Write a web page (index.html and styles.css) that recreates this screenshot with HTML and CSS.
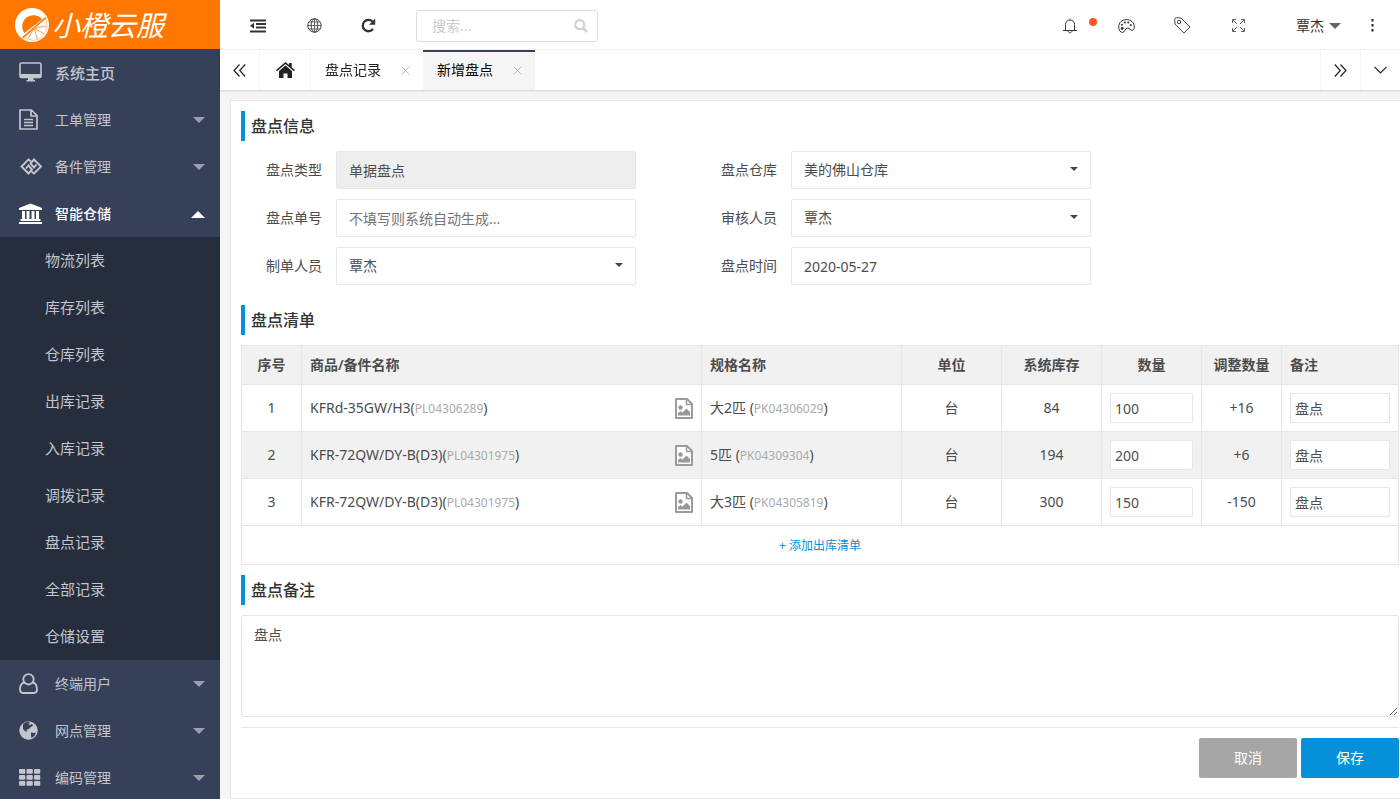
FILE: index.html
```html
<!DOCTYPE html>
<html lang="zh-CN">
<head>
<meta charset="utf-8">
<meta name="viewport" content="width=device-width, initial-scale=1">
<title>新增盘点 - 小橙云服</title>
<link rel="stylesheet" href="styles.css">
</head>
<body>
<svg class="defs" aria-hidden="true">
  <symbol id="pic" viewBox="0 0 18 21">
    <path d="M1 1h11l5 5v14H1z" fill="#fff" stroke="#999ba0" stroke-width="2" stroke-linejoin="round"/>
    <path d="M11.500 1v5.500H17" fill="none" stroke="#999ba0" stroke-width="1.500"/>
    <circle cx="5.500" cy="9.500" r="2.200" fill="#999"/>
    <path d="M3 17.500v-2.500l2.500-2 2 1.500 4-4 3.500 3.500v3.500z" fill="#999"/>
  </symbol>
  <symbol id="close" viewBox="0 0 9 9"><path d="M.7.7l7.600 7.600M8.300.7L.7 8.300" stroke="#bbb" fill="none"/></symbol>
  <symbol id="down" viewBox="0 0 12 6"><path d="M0 0h12L6 6z"/></symbol>
</svg>
<div class="app">
  <aside class="sidebar">
    <a class="brand" href="#">
      <svg width="34" height="34" viewBox="0 0 34 34" aria-hidden="true">
        <circle cx="17" cy="17" r="17" fill="#fff"/>
        <path d="M27 11.500A10.500 10.500 0 1 0 9.500 25z" fill="#ff7700"/>
        <path d="M31 9.500L7.500 29.800" stroke="#ff7700" stroke-width="1.600"/>
        <path d="M19 20.500l12-2.500M19 20.500l10 5M19 20.500l3.500 11M19 20.500l-6 10" stroke="#ffa04d" stroke-width="1"/>
        <path d="M31 10.500l1 7-1.500 7-5 5.500-7 2.500-10-2.500" fill="none" stroke="#ffb066" stroke-width=".7"/>
      </svg>
      <span>小橙云服</span>
    </a>
    <nav class="menu">
      <a class="item home" href="#">
        <svg width="24" height="22" viewBox="0 0 24 22"><rect x="1" y="1" width="21" height="14.500" rx="1.500" fill="none" stroke="currentColor" stroke-width="1.600"/><path d="M1 12h21v3a1 1 0 0 1-1 1H2a1 1 0 0 1-1-1zM9 15.500h5.500V18H16v1.500H7.500V18H9z" fill="currentColor"/></svg>
        <span>系统主页</span>
      </a>
      <button class="item" type="button">
        <svg width="24" height="22" viewBox="0 0 24 22"><path d="M1 1h11.500L18 6.500V20H1zM12 1.500V7h5.500M5 10.500h9M5 13.500h9M5 16.500h9" fill="none" stroke="currentColor" stroke-width="1.700" stroke-linejoin="round"/></svg>
        <span>工单管理</span><svg class="arrow" width="12" height="6"><use href="#down"/></svg>
      </button>
      <button class="item" type="button">
        <svg width="24" height="22" viewBox="0 0 24 22"><g fill="none" stroke="currentColor" stroke-width="1.900"><path d="M12 5.500L9.500 3.500 2.500 10.500 9.500 17.500 13 13.500 9.500 9.500 7 12.500"/><path d="M12.500 15.500L15 17.500 22 10.500 15 3.500 11.500 7.500 15 11.500 17.500 8.500"/></g></svg>
        <span>备件管理</span><svg class="arrow" width="12" height="6"><use href="#down"/></svg>
      </button>
      <button class="item active" type="button" aria-expanded="true">
        <svg width="24" height="22" viewBox="0 0 24 22"><path d="M11.500.5L23 5v2H0V5zM3 8h3v8h1.500V8h3v8h2V8h3v8H17V8h3v8h1.500v2h-20v-2H3zM0 19h23v2H0z" fill="currentColor"/></svg>
        <span>智能仓储</span><svg class="arrow" width="14" height="7" viewBox="0 0 14 7"><path d="M0 7h14L7 0z"/></svg>
      </button>
      <div class="submenu">
        <a href="#">物流列表</a><a href="#">库存列表</a><a href="#">仓库列表</a>
        <a href="#">出库记录</a><a href="#">入库记录</a><a href="#">调拨记录</a>
        <a href="#">盘点记录</a><a href="#">全部记录</a><a href="#">仓储设置</a>
      </div>
      <button class="item" type="button">
        <svg width="24" height="22" viewBox="0 0 24 22"><path d="M5.500 9.500C2.500 10 1 12.500 1 16.500c0 2.500 1.500 3.500 3 3.500h11c1.500 0 3-1 3-3.500 0-4-1.500-6.500-4.500-7" fill="none" stroke="currentColor" stroke-width="1.800"/><circle cx="9.500" cy="6.300" r="5.200" fill="none" stroke="currentColor" stroke-width="1.800"/></svg>
        <span>终端用户</span><svg class="arrow" width="12" height="6"><use href="#down"/></svg>
      </button>
      <button class="item" type="button">
        <svg width="24" height="22" viewBox="0 0 24 22"><circle cx="9.500" cy="10.500" r="9.200" fill="currentColor"/><path d="M4 4c2-1.500 4-2.200 6-2.200l1 1.500-2 .5 2 1.500 2-1.500 1 2-2.500 1.500-2 2-2 .5.500 2-2-.5-2-2.500zM12 12.500l3 .500 2-.500-1.500 3.500-3 2-.5-3z" fill="#364059"/></svg>
        <span>网点管理</span><svg class="arrow" width="12" height="6"><use href="#down"/></svg>
      </button>
      <button class="item" type="button">
        <svg width="24" height="22" viewBox="0 0 24 22"><g fill="currentColor"><rect x="0" y="2" width="6.300" height="4.700" rx="1"/><rect x="7.500" y="2" width="6.300" height="4.700" rx="1"/><rect x="15" y="2" width="6.300" height="4.700" rx="1"/><rect x="0" y="8" width="6.300" height="4.700" rx="1"/><rect x="7.500" y="8" width="6.300" height="4.700" rx="1"/><rect x="15" y="8" width="6.300" height="4.700" rx="1"/><rect x="0" y="14" width="6.300" height="4.700" rx="1"/><rect x="7.500" y="14" width="6.300" height="4.700" rx="1"/><rect x="15" y="14" width="6.300" height="4.700" rx="1"/></g></svg>
        <span>编码管理</span><svg class="arrow" width="12" height="6"><use href="#down"/></svg>
      </button>
    </nav>
  </aside>

  <div class="main">
    <header class="topbar">
      <button class="tool" type="button" aria-label="收起菜单"><svg width="16" height="14" viewBox="0 0 16 14"><path d="M0 1.500h16M6 5h10M6 8.500h10M0 12.500h16" stroke="#333" stroke-width="2" fill="none"/><path d="M0 6.800l4-3v6z" fill="#333"/></svg></button>
      <button class="tool" type="button" aria-label="网站"><svg width="15" height="15" viewBox="0 0 15 15"><g fill="none" stroke="#444"><circle cx="7.500" cy="7.500" r="6.700"/><ellipse cx="7.500" cy="7.500" rx="3.300" ry="6.700"/><path d="M.8 7.500h13.400M7.500.8v13.400M2 4h11M2 11h11" stroke-width=".8"/></g></svg></button>
      <button class="tool" type="button" aria-label="刷新"><svg width="18" height="15" viewBox="0 0 18 15"><path d="M12 11a5.700 5.700 0 1 1-.5-7.500" fill="none" stroke="#333" stroke-width="2.300"/><path d="M14.200.5v6.200H8z" fill="#333"/></svg></button>
      <label class="search">
        <input type="text" placeholder="搜索..." aria-label="搜索">
        <svg width="14" height="14" viewBox="0 0 14 14"><circle cx="5.700" cy="5.700" r="4.500" fill="none" stroke="#d2d2d2" stroke-width="2.200"/><path d="M9 9l4 4" stroke="#d2d2d2" stroke-width="2.600"/></svg>
      </label>
      <div class="tools">
        <button class="tool" type="button" aria-label="消息"><svg width="14" height="16" viewBox="0 0 14 16"><path d="M2.500 12.500v-6a4.500 4.500 0 0 1 9 0v6M0 12.500h14M5 13c.5 2.300 3.500 2.300 4 0M7 1.500V.5" fill="none" stroke="#333"/></svg><i class="dot"></i></button>
        <button class="tool" type="button" aria-label="主题"><svg width="17" height="14" viewBox="0 0 17 14"><path d="M8.500.6C4 .6.7 3.500.7 8c0 3.500 1.800 5.400 4 5.400 2.600 0 1.800-4.400 5-4.400 2.500 0 2.300 2.400 4.300 2.400 1.500 0 2.300-1.400 2.300-3.200C16.300 3.500 13 .6 8.500.6z" fill="none" stroke="#333"/><g fill="#333"><circle cx="4.200" cy="9.500" r="1.400"/><circle cx="4" cy="5.800" r="1"/><circle cx="6.800" cy="3.600" r="1"/><circle cx="10.300" cy="3.600" r="1"/><circle cx="12.800" cy="6" r="1"/></g></svg></button>
        <button class="tool" type="button" aria-label="标签"><svg width="17" height="17" viewBox="0 0 17 17"><path d="M.7 2.500Q.7.700 2.500.7L7 1l9 9-6 6L1 7z" fill="none" stroke="#445" stroke-linejoin="round"/><circle cx="5" cy="5" r="1.700" fill="none" stroke="#445"/></svg></button>
        <button class="tool" type="button" aria-label="全屏"><svg width="13" height="13" viewBox="0 0 13 13"><path d="M.5 4V.5H4M.5.5L5 5M9 .5h3.500V4M12.500.5L8 5M.5 9v3.500H4M.5 12.500L5 8M12.500 9v3.500H9M12.500 12.500L8 8" fill="none" stroke="#666"/></svg></button>
        <button class="user" type="button">覃杰<svg width="12" height="6" fill="#666"><use href="#down"/></svg></button>
        <button class="tool" type="button" aria-label="更多"><svg width="3" height="13" viewBox="0 0 3 13" fill="#222"><path d="M.5 0h2v2.500h-2zM.5 5h2v2.500h-2zM.5 10h2v2.500h-2z"/></svg></button>
      </div>
    </header>

    <div class="tabs">
      <button class="tab-ctl" type="button" aria-label="向左"><svg width="13" height="13" viewBox="0 0 13 13"><path d="M6.500.5l-5.500 6 5.500 6M12.200.5l-5.500 6 5.500 6" fill="none" stroke="#222" stroke-width="1.200"/></svg></button>
      <a class="tab-home" href="#" aria-label="首页"><svg width="19" height="16" viewBox="0 0 19 16"><path d="M9.500 0l3.500 3V1h2.700v4.300L19 8l-1 1.200-8.500-7.200L1 9.200 0 8z" fill="#222"/><path d="M9.500 3.500l6.500 5.500v7h-4.500v-4.500h-4V16H3V9z" fill="#222"/></svg></a>
      <div class="tab"><a href="#">盘点记录</a><button type="button" aria-label="关闭盘点记录"><svg width="9" height="9"><use href="#close"/></svg></button></div>
      <div class="tab current"><a href="#">新增盘点</a><button type="button" aria-label="关闭新增盘点"><svg width="9" height="9"><use href="#close"/></svg></button></div>
      <div class="tab-end">
        <button class="tab-ctl" type="button" aria-label="向右"><svg width="13" height="13" viewBox="0 0 13 13"><path d="M.8.5l5.500 6-5.500 6M6.500.5l5.500 6-5.500 6" fill="none" stroke="#222" stroke-width="1.200"/></svg></button>
        <button class="tab-ctl" type="button" aria-label="标签操作"><svg width="13" height="8" viewBox="0 0 13 8"><path d="M.5.8l6 6 6-6" fill="none" stroke="#222" stroke-width="1.200"/></svg></button>
      </div>
    </div>

    <main class="page">
      <form class="panel">
        <h2>盘点信息</h2>
        <div class="fields">
          <label for="type">盘点类型</label><input id="type" type="text" value="单据盘点" disabled>
          <label for="store">盘点仓库</label><span class="select"><select id="store"><option>美的佛山仓库</option></select></span>
          <label for="no">盘点单号</label><input id="no" type="text" placeholder="不填写则系统自动生成...">
          <label for="auditor">审核人员</label><span class="select"><select id="auditor"><option>覃杰</option></select></span>
          <label for="maker">制单人员</label><span class="select"><select id="maker"><option>覃杰</option></select></span>
          <label for="date">盘点时间</label><input id="date" type="text" value="2020-05-27">
        </div>

        <h2>盘点清单</h2>
        <table>
          <colgroup><col class="w60"><col class="w400"><col class="w200"><col class="w100"><col class="w100"><col class="w100"><col class="w80"><col></colgroup>
          <thead>
            <tr><th>序号</th><th class="left">商品/备件名称</th><th class="left">规格名称</th><th>单位</th><th>系统库存</th><th>数量</th><th>调整数量</th><th class="left">备注</th></tr>
          </thead>
          <tbody>
            <tr><td>1</td><td class="left"><div class="product"><span>KFRd-35GW/H3(<small>PL04306289</small>)</span><svg width="18" height="21"><use href="#pic"/></svg></div></td><td class="left">大2匹 (<small>PK04306029</small>)</td><td>台</td><td>84</td><td><input type="text" value="100" aria-label="数量 1"></td><td>+16</td><td><input type="text" value="盘点" aria-label="备注 1"></td></tr>
            <tr><td>2</td><td class="left"><div class="product"><span>KFR-72QW/DY-B(D3)(<small>PL04301975</small>)</span><svg width="18" height="21"><use href="#pic"/></svg></div></td><td class="left">5匹 (<small>PK04309304</small>)</td><td>台</td><td>194</td><td><input type="text" value="200" aria-label="数量 2"></td><td>+6</td><td><input type="text" value="盘点" aria-label="备注 2"></td></tr>
            <tr><td>3</td><td class="left"><div class="product"><span>KFR-72QW/DY-B(D3)(<small>PL04301975</small>)</span><svg width="18" height="21"><use href="#pic"/></svg></div></td><td class="left">大3匹 (<small>PK04305819</small>)</td><td>台</td><td>300</td><td><input type="text" value="150" aria-label="数量 3"></td><td>-150</td><td><input type="text" value="盘点" aria-label="备注 3"></td></tr>
          </tbody>
          <tfoot><tr><td colspan="8"><a href="#">+ 添加出库清单</a></td></tr></tfoot>
        </table>

        <h2 id="remark-title">盘点备注</h2>
        <textarea aria-labelledby="remark-title">盘点</textarea>
        <div class="actions">
          <button type="button" class="cancel">取消</button>
          <button type="submit" class="save">保存</button>
        </div>
      </form>
    </main>
  </div>
</div>
</body>
</html>
```
FILE: styles.css
```css
* { box-sizing: border-box; }
body {
  margin: 0;
  font: 14px/20px "Noto Sans", "Noto Sans CJK SC", sans-serif;
  color: #4c4c4c;
  background: #f5f5f5;
}
a { color: inherit; text-decoration: none; }
button, input, select, textarea { font: inherit; color: inherit; }
button { border: 0; padding: 0; background: none; cursor: pointer; }
svg { display: block; flex: none; }
.defs { position: absolute; width: 0; height: 0; }

.app { display: flex; height: 100vh; overflow: hidden; }

/* Sidebar */
.sidebar {
  flex: none;
  width: 220px;
  overflow-y: auto;
  scrollbar-width: none;
  background: #364059;
  color: #c3c6cd;
}
.brand {
  display: flex;
  align-items: center;
  gap: 3px;
  height: 49px;
  padding-left: 15px;
  background: #ff7700;
  color: #fff;
  font-size: 28px;
  line-height: 40px;
  font-style: italic;
}
.item {
  display: flex;
  align-items: center;
  gap: 12px;
  width: 100%;
  height: 47px;
  padding: 1px 15px 0 19px;
  text-align: left;
}
.item.home { padding-top: 0; font-size: 15px; font-weight: 500; }
.item.active { color: #fff; font-weight: 500; }
.arrow { margin-left: auto; fill: #9a9fac; }
.active .arrow { fill: #fff; }
.submenu { background: #262d3d; font-size: 15px; }
.submenu a { display: block; padding-left: 45px; line-height: 47px; }

/* Top bar */
.main { flex: 1; min-width: 0; display: flex; flex-direction: column; }
.topbar {
  flex: none;
  display: flex;
  align-items: center;
  height: 50px;
  padding: 2px 0 0 10px;
  background: #fff;
  border-bottom: 1px solid #f2f2f2;
  color: #333;
}
.tool {
  position: relative;
  display: flex;
  align-items: center;
  justify-content: center;
  width: 56px;
  height: 46px;
}
.dot {
  position: absolute;
  top: 15px;
  right: 1px;
  width: 8px;
  height: 8px;
  border-radius: 50%;
  background: #ff5722;
}
.search {
  display: flex;
  align-items: center;
  width: 182px;
  height: 32px;
  margin-left: 18px;
  padding: 0 9px 0 15px;
  border: 1px solid #ddd;
  border-radius: 3px;
}
.search input { flex: 1; min-width: 0; border: 0; padding: 0; outline: 0; background: none; }
.search input::placeholder { color: #ccc; }
.tools { display: flex; margin-left: auto; }
.user { display: flex; align-items: center; gap: 5px; padding-left: 30px; padding-right: 3px; }

/* Tabs */
.tabs {
  position: relative;
  flex: none;
  display: flex;
  height: 40px;
  background: #fff;
  box-shadow: 0 1px 2px rgba(0, 0, 0, .15);
  color: #222;
}
.tab-ctl, .tab-home { display: flex; align-items: center; justify-content: center; }
.tab-ctl { width: 40px; border-right: 1px solid #f4f4f4; }
.tab-home { width: 51px; border-right: 1px solid #f4f4f4; }
.tab {
  display: flex;
  align-items: center;
  justify-content: space-between;
  width: 112px;
  padding: 0 13px 0 14px;
}
.tab.current { background: #f5f5f5; border-top: 2px solid #364059; color: #000; }
.tab.current > * { margin-top: -2px; }
.tab-end { display: flex; margin-left: auto; }
.tab-end .tab-ctl { border-right: 0; border-left: 1px solid #f4f4f4; }

/* Page */
.page { flex: 1; min-height: 0; padding: 10px 0 0 10px; overflow: auto; scrollbar-width: none; }
.panel {
  padding: 10px 1px 20px 10px;
  background: #fff;
  border: 1px solid #e6e6e6;
  border-right: 0;
}
h2 {
  margin: 0 0 10px;
  padding-left: 6px;
  border-left: 4px solid #0790da;
  font-size: 16px;
  line-height: 30px;
  font-weight: 500;
  color: #333;
}
.fields {
  display: grid;
  grid-template-columns: 81px 300px 127px 300px;
  column-gap: 14px;
  row-gap: 10px;
  align-items: center;
  margin-bottom: 20px;
}
.fields label { text-align: right; }
input, select, textarea { border: 1px solid #e6e6e6; border-radius: 2px; background: #fff; }
.fields input, .fields select { width: 100%; height: 38px; padding: 0 12px; }
.fields input:disabled { background: #eee; }
.fields input::placeholder { color: #757575; }
.select { position: relative; }
.select select { display: block; appearance: none; }
.select::after {
  content: "";
  position: absolute;
  top: 16px;
  right: 13px;
  border: 4px solid transparent;
  border-top-color: #444;
  border-bottom: 0;
  pointer-events: none;
}

table { width: 100%; table-layout: fixed; border-collapse: collapse; margin-bottom: 10px; }
th, td { height: 39px; padding: 0 8px; border: 1px solid #e6e6e6; text-align: center; }
th { padding: 0; background: #f1f1f1; font-weight: 600; }
th.left { padding: 0 8px; }
.left { text-align: left; }
tbody td { height: 47px; }
tbody tr:nth-child(even) { background: #f1f1f1; }
td input { display: block; width: 100%; height: 30px; padding: 0 4px; }
small { font-size: 12px; color: #aaa; }
.product { display: flex; align-items: center; justify-content: space-between; }
tfoot a { font-size: 12px; color: #0790da; }
.w60 { width: 60px; }
.w80 { width: 80px; }
.w100 { width: 100px; }
.w200 { width: 200px; }
.w400 { width: 400px; }

textarea { display: block; width: 100%; height: 102px; padding: 9px 12px; resize: vertical; }
.actions {
  display: flex;
  justify-content: flex-end;
  gap: 4px;
  margin-top: 10px;
  padding-top: 10px;
  border-top: 1px solid #e6e6e6;
}
.actions button { width: 98px; height: 40px; border-radius: 2px; color: #fff; }
.cancel { background: #a6a6a6; }
.save { background: #0790da; }
```
